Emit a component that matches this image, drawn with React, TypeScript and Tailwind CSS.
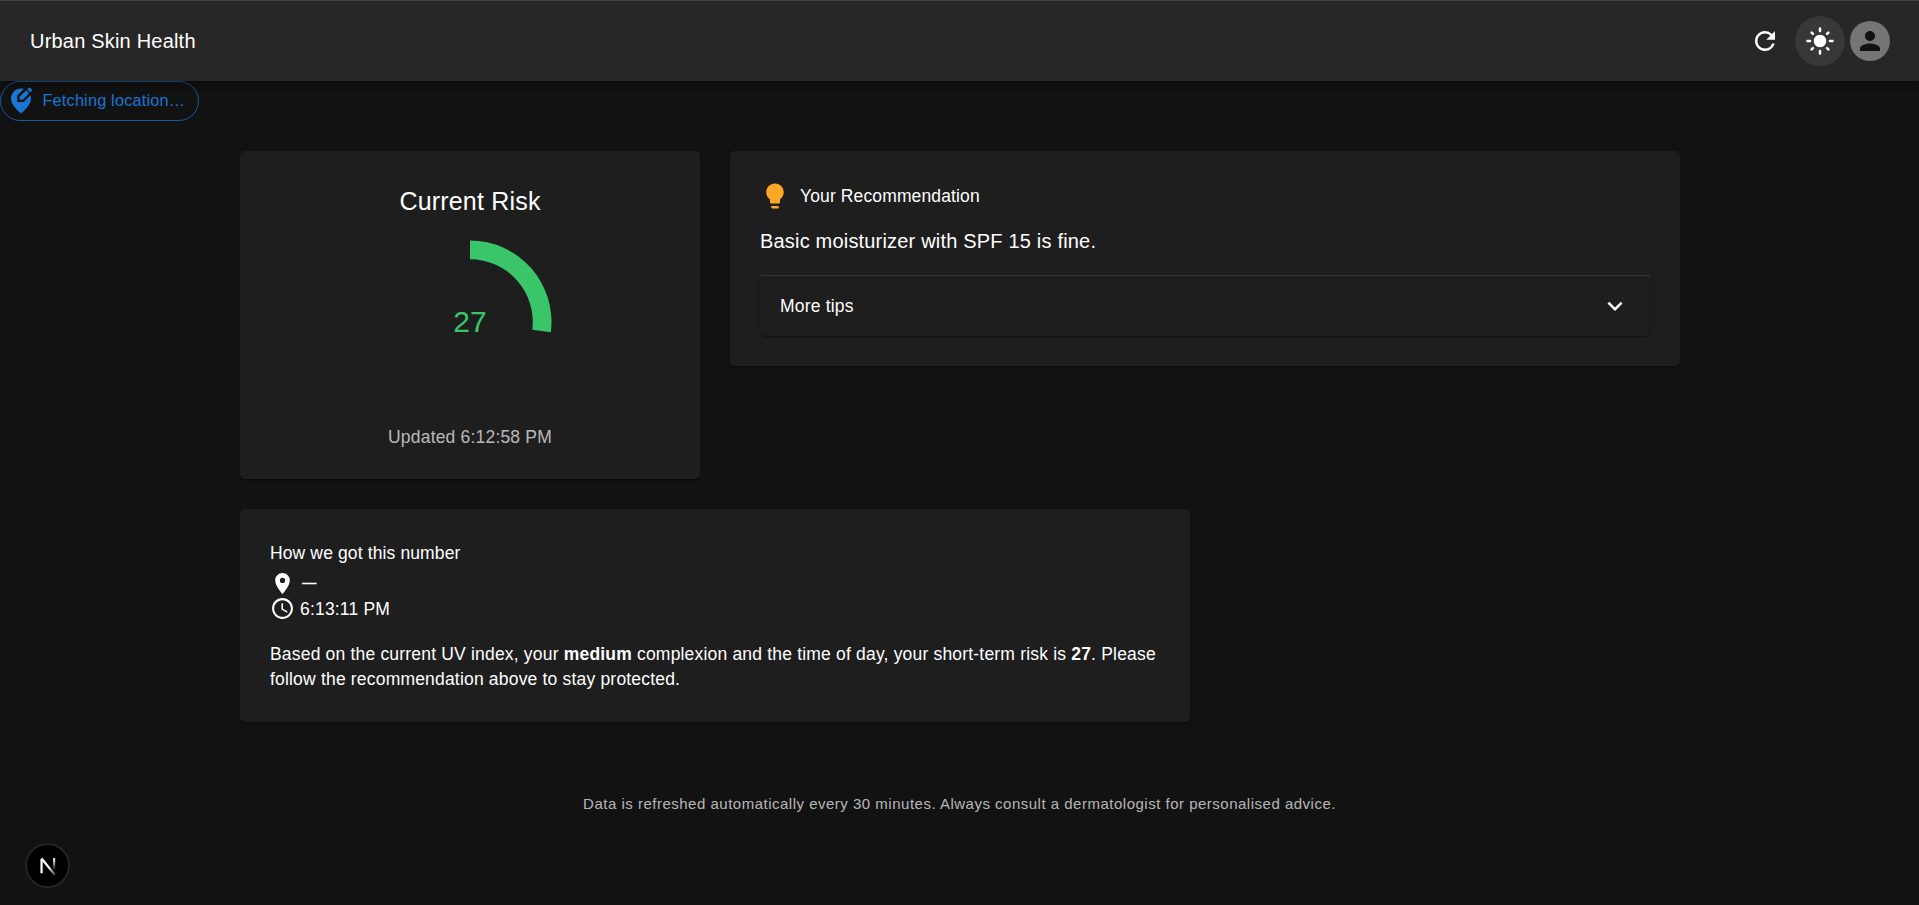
import React from "react";
import {
  MdAccessTime,
  MdExpandMore,
  MdLightMode,
  MdLightbulb,
  MdLocationOn,
  MdPerson,
  MdRefresh,
} from "react-icons/md";

const cardClass =
  "rounded-[5px] bg-[#1e1e1e] p-[30px] shadow-[0_2px_1px_-1px_rgba(0,0,0,0.2),0_1px_1px_0_rgba(0,0,0,0.14),0_1px_3px_0_rgba(0,0,0,0.12)]";

function Header() {
  return (
    <header className="relative z-10 flex h-[81px] items-center justify-between border-t border-[#4a4043] bg-[#272727] pr-[29px] pl-[30px] shadow-[0_2.5px_5px_-1.25px_rgba(0,0,0,0.2),0_5px_6.25px_0_rgba(0,0,0,0.14),0_1.25px_12.5px_0_rgba(0,0,0,0.12)]">
      <h1 className="text-[20px] leading-8 tracking-[0.01em]">Urban Skin Health</h1>
      <div className="flex items-center">
        <button className="flex size-[50px] items-center justify-center rounded-full" aria-label="Refresh">
          <MdRefresh className="size-[30px]" />
        </button>
        <button
          className="ml-[5px] flex size-[50px] items-center justify-center rounded-full bg-[#383838]"
          aria-label="Toggle theme"
        >
          <MdLightMode className="size-[30px]" />
        </button>
        <div className="ml-[5px] flex size-10 items-center justify-center rounded-full bg-[#757575] text-[#121212]">
          <MdPerson className="size-[30px]" />
        </div>
      </div>
    </header>
  );
}

function EditLocationIcon() {
  return (
    <svg className="ml-[5px] size-[30px] shrink-0" viewBox="0 0 24 24" fill="currentColor">
      <path d="M14.2 2.3C13.5 2.1 12.8 2 12 2C7.8 2 4 5.22 4 10.2c0 3.32 2.67 7.25 8 11.8c5.33-4.55 8-8.48 8-11.8c0-1.05-.17-2-.47-2.9L14.1 12.8H9V7.6z" />
      <path d="M10.9 8.6V11h2.4l5.2-5.2L16.1 3.4z" />
      <path d="M16.9 2.6l1.1-1.1c.4-.4 1-.4 1.4 0l1.1 1.1c.4.4.4 1 0 1.4l-1.1 1.1z" />
    </svg>
  );
}

function LocationChip() {
  return (
    <div className="flex h-10 w-[199px] items-center rounded-full border border-[#1976d2]/70 text-[#1976d2]">
      <EditLocationIcon />
      <span className="ml-[6.5px] pb-[2px] text-[16.25px] leading-6 tracking-[0.012em] whitespace-nowrap">
        Fetching location…
      </span>
    </div>
  );
}

function RiskGauge({ value }: { value: number }) {
  const outer = 81.5;
  const inner = 62.75;
  const angle = (value / 100) * 2 * Math.PI;
  const point = (r: number) => `${100 + r * Math.sin(angle)} ${100 - r * Math.cos(angle)}`;
  return (
    <div className="grid size-[200px] place-items-center text-[#3ac569]">
      <svg className="col-start-1 row-start-1 size-[200px]" viewBox="0 0 200 200">
        <path
          fill="currentColor"
          d={`M100 ${100 - outer}A${outer} ${outer} 0 0 1 ${point(outer)}L${point(inner)}A${inner} ${inner} 0 0 0 100 ${100 - inner}Z`}
        />
      </svg>
      <span className="col-start-1 row-start-1 text-[30px] leading-10">{value}</span>
    </div>
  );
}

function RiskCard() {
  return (
    <section className={`${cardClass} flex h-[328px] flex-col items-center`}>
      <h2 className="text-[25px] leading-10 tracking-[0.0075em]">Current Risk</h2>
      <div className="mt-[1px]">
        <RiskGauge value={27} />
      </div>
      <p className="mt-[3px] text-[17.5px] leading-[25px] tracking-[0.01071em] text-white/70">Updated 6:12:58 PM</p>
    </section>
  );
}

function RecommendationCard() {
  return (
    <section className={`${cardClass} col-span-2 self-start`}>
      <div className="flex items-center gap-[10px]">
        <MdLightbulb className="size-[30px] text-[#ffa726]" />
        <h3 className="text-[17.5px] leading-7 tracking-[0.00714em]">Your Recommendation</h3>
      </div>
      <p className="mt-[15px] text-[20px] leading-[30px] tracking-[0.00938em]">Basic moisturizer with SPF 15 is fine.</p>
      <div className="mt-[19px] border-t border-[#393939]">
        <div className="flex h-[60px] items-center justify-between rounded-b-[5px] px-5 shadow-[0_2px_1px_-1px_rgba(0,0,0,0.2),0_1px_1px_0_rgba(0,0,0,0.12),0_1px_3px_0_rgba(0,0,0,0.1)]">
          <span className="text-[17.5px] leading-[25px] tracking-[0.01071em]">More tips</span>
          <MdExpandMore className="size-[30px]" />
        </div>
      </div>
    </section>
  );
}

function ExplanationCard() {
  return (
    <section className={`${cardClass} col-span-2 h-[213px] text-[17.5px] leading-[25px] tracking-[0.01071em]`}>
      <h3 className="leading-7 tracking-[0.00714em]">How we got this number</h3>
      <div className="mt-1 flex h-[25px] items-center gap-[5px]">
        <MdLocationOn className="size-[25px]" />
        <span className="pl-[2px] text-[14.5px] font-bold">—</span>
      </div>
      <div className="flex h-[25px] items-center gap-[5px]">
        <MdAccessTime className="size-[25px]" />
        <span className="pt-[1px]">6:13:11 PM</span>
      </div>
      <p className="mt-[21px]">
        Based on the current UV index, your <b>medium</b> complexion and the time of day, your short-term risk is{" "}
        <b>27</b>. Please follow the recommendation above to stay protected.
      </p>
    </section>
  );
}

function DevBadge() {
  return (
    <div className="fixed bottom-[17px] left-[25px] flex size-[45px] items-center justify-center rounded-full border-2 border-[#242424] bg-black">
      <svg className="size-5" viewBox="0 0 18 18" fill="none">
        <defs>
          <linearGradient id="stem" x1="0" y1="2" x2="0" y2="13" gradientUnits="userSpaceOnUse">
            <stop stopColor="#fff" />
            <stop offset="1" stopColor="#fff" stopOpacity="0" />
          </linearGradient>
          <linearGradient id="slash" x1="10" y1="10" x2="16" y2="17" gradientUnits="userSpaceOnUse">
            <stop stopColor="#fff" />
            <stop offset="1" stopColor="#fff" stopOpacity="0.2" />
          </linearGradient>
        </defs>
        <path d="M3.2 15.5V2.5" stroke="#fff" strokeWidth="2" />
        <path d="M3.2 2.2L15.2 17" stroke="url(#slash)" strokeWidth="2" />
        <path d="M14.5 2V12.5" stroke="url(#stem)" strokeWidth="2" />
      </svg>
    </div>
  );
}

export default function App() {
  return (
    <div className="min-h-screen bg-[#121212] font-['Liberation_Sans',Arial,sans-serif] text-white">
      <Header />
      <LocationChip />
      <main className="mt-[30px] ml-[240px] grid w-[1440px] grid-cols-3 gap-[30px]">
        <RiskCard />
        <RecommendationCard />
        <ExplanationCard />
      </main>
      <footer className="mt-[69px] text-center text-[15px] leading-[25px] tracking-[0.03333em] text-white/70">
        Data is refreshed automatically every 30 minutes. Always consult a dermatologist for personalised advice.
      </footer>
      <DevBadge />
    </div>
  );
}
